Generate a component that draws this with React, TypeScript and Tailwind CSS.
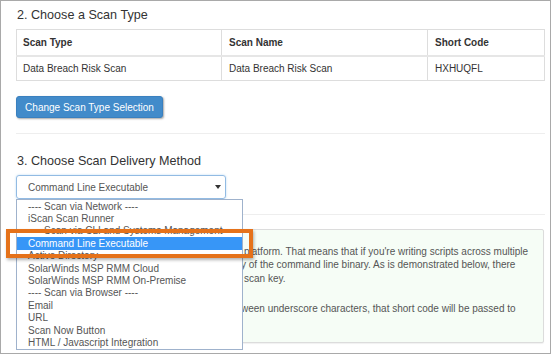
const options = [
  { label: "---- Scan via Network ----" },
  { label: "iScan Scan Runner" },
  { label: "---- Scan via CLI and Systems Management ----" },
  { label: "Command Line Executable", active: true },
  { label: "Active Directory" },
  { label: "SolarWinds MSP RMM Cloud" },
  { label: "SolarWinds MSP RMM On-Premise" },
  { label: "---- Scan via Browser ----" },
  { label: "Email" },
  { label: "URL" },
  { label: "Scan Now Button" },
  { label: "HTML / Javascript Integration" },
];

// only the part of each line that shows to the right of the open list
function Line({ text, wide }: { text: string; wide?: boolean }) {
  return (
    <div className={`flex h-[13.3px] items-center whitespace-nowrap ${wide ? "pl-[216px]" : "pl-[213px]"}`}>
      {text}
    </div>
  );
}

export default function App() {
  return (
    <div className="relative h-[354px] w-[551px] border border-[#a9a9a9] bg-white pt-[6px] pl-[15px] pr-[5px] font-['Liberation_Sans',Arial,sans-serif] text-[10px] text-[#333]">
      {/* Section 2 */}
      <h2 className="h-[16px] text-[12.6px] leading-[16px] pl-[1px]">2. Choose a Scan Type</h2>

      <table className="mt-[6px] w-full border-collapse border border-[#dddddd]">
        <thead>
          <tr className="h-[26px] border-b-2 border-[#e6e6e6] text-left">
            <th className="w-[205px] border-r border-[#dddddd] pl-[6px] font-bold">Scan Type</th>
            <th className="w-[206px] border-r border-[#dddddd] pl-[7px] font-bold">Scan Name</th>
            <th className="pl-[7px] font-bold">Short Code</th>
          </tr>
        </thead>
        <tbody>
          <tr className="h-[25px]">
            <td className="border-r border-[#dddddd] pl-[6px]">Data Breach Risk Scan</td>
            <td className="border-r border-[#dddddd] pl-[7px]">Data Breach Risk Scan</td>
            <td className="pl-[7px]">HXHUQFL</td>
          </tr>
        </tbody>
      </table>

      <button className="mt-[15px] flex h-[22px] w-[147px] items-center justify-center rounded-[3px] border border-[#3a80bf] bg-[#428bca] text-white shadow-[1px_1px_2px_rgba(0,0,0,0.35)]">
        Change Scan Type Selection
      </button>

      <div className="mt-[15px] h-px bg-[#eeeeee]" />

      {/* Section 3 */}
      <h2 className="mt-[19px] h-[16px] text-[12.6px] leading-[16px] pl-[1px]">3. Choose Scan Delivery Method</h2>

      <div className="relative z-10 mt-[6px] w-[210px]">
        <div className="flex h-[24px] items-center justify-between rounded-[3px] border border-[#92bbe3] pl-[11px] pr-[3px] text-[#555] shadow-[0_0_2px_rgba(102,175,233,0.5)]">
          <span>Command Line Executable</span>
          <svg width="6" height="4" viewBox="0 0 6 4" className="mr-[1px]">
            <path d="M0 0h6L3 4z" fill="#333" />
          </svg>
        </div>

        <ul className="absolute left-0 top-[24px] w-[227px] border border-[#9fb2cc] bg-white text-[#555]">
          {options.map((o) => (
            <li
              key={o.label}
              className={`flex h-[12.4px] items-center whitespace-nowrap pl-[11px] ${
                o.active ? "bg-[#3796f7] text-white" : ""
              }`}
            >
              {o.label}
            </li>
          ))}
        </ul>
      </div>

      <div className="mt-[15px] h-px bg-[#eeeeee]" />

      <div className="mt-[14px] mr-[1px] h-[114px] rounded-[2px] border border-[#dcdcdc] bg-[#f6fdf6] pt-[15px] pl-[11px] text-[#555] shadow-[0_1px_1px_rgba(0,0,0,0.06)]">
        <Line wide text="platform. That means that if you're writing scripts across multiple" />
        <Line text="y of the command line binary. As is demonstrated below, there" />
        <Line wide text="scan key." />
        <div className="mt-[16.7px]" />
        <Line text="ween underscore characters, that short code will be passed to" />
        <div className="h-[13.3px]" />
      </div>

      {/* callout around the selected option */}
      <div className="absolute left-[5px] top-[228px] z-20 h-[29px] w-[247px] border-4 border-[#e5721a] shadow-[1px_2px_3px_rgba(0,0,0,0.3)]" />
    </div>
  );
}
